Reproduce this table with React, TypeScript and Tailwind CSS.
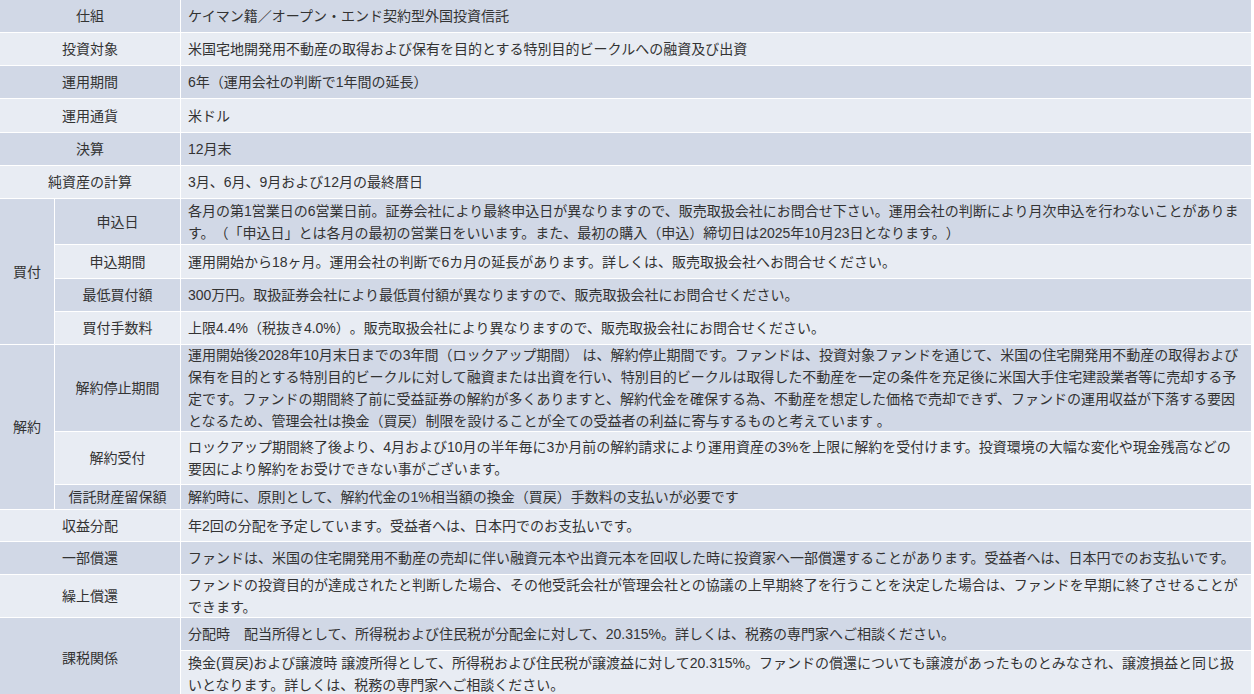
const dark = "bg-[#d1d8e6]";
const light = "bg-[#e8ecf3]";

type Item = { label: string; value: string; tone: string };

const top: Item[] = [
  { label: "仕組", value: "ケイマン籍／オープン・エンド契約型外国投資信託", tone: dark },
  { label: "投資対象", value: "米国宅地開発用不動産の取得および保有を目的とする特別目的ビークルへの融資及び出資", tone: light },
  { label: "運用期間", value: "6年（運用会社の判断で1年間の延長）", tone: dark },
  { label: "運用通貨", value: "米ドル", tone: light },
  { label: "決算", value: "12月末", tone: dark },
  { label: "純資産の計算", value: "3月、6月、9月および12月の最終暦日", tone: light },
];

const buy: Item[] = [
  {
    label: "申込日",
    value:
      "各月の第1営業日の6営業日前。証券会社により最終申込日が異なりますので、販売取扱会社にお問合せ下さい。運用会社の判断により月次申込を行わないことがあります。（「申込日」とは各月の最初の営業日をいいます。また、最初の購入（申込）締切日は2025年10月23日となります。）",
    tone: dark,
  },
  {
    label: "申込期間",
    value: "運用開始から18ヶ月。運用会社の判断で6カ月の延長があります。詳しくは、販売取扱会社へお問合せください。",
    tone: light,
  },
  {
    label: "最低買付額",
    value: "300万円。取扱証券会社により最低買付額が異なりますので、販売取扱会社にお問合せください。",
    tone: dark,
  },
  {
    label: "買付手数料",
    value: "上限4.4%（税抜き4.0%）。販売取扱会社により異なりますので、販売取扱会社にお問合せください。",
    tone: light,
  },
];

const sell: Item[] = [
  {
    label: "解約停止期間",
    value:
      "運用開始後2028年10月末日までの3年間（ロックアップ期間） は、解約停止期間です。ファンドは、投資対象ファンドを通じて、米国の住宅開発用不動産の取得および保有を目的とする特別目的ビークルに対して融資または出資を行い、特別目的ビークルは取得した不動産を一定の条件を充足後に米国大手住宅建設業者等に売却する予定です。ファンドの期間終了前に受益証券の解約が多くありますと、解約代金を確保する為、不動産を想定した価格で売却できず、ファンドの運用収益が下落する要因となるため、管理会社は換金（買戻）制限を設けることが全ての受益者の利益に寄与するものと考えています 。",
    tone: dark,
  },
  {
    label: "解約受付",
    value:
      "ロックアップ期間終了後より、4月および10月の半年毎に3か月前の解約請求により運用資産の3%を上限に解約を受付けます。投資環境の大幅な変化や現金残高などの要因により解約をお受けできない事がございます。",
    tone: light,
  },
  {
    label: "信託財産留保額",
    value: "解約時に、原則として、解約代金の1%相当額の換金（買戻）手数料の支払いが必要です",
    tone: dark,
  },
];

const bottom: Item[] = [
  { label: "収益分配", value: "年2回の分配を予定しています。受益者へは、日本円でのお支払いです。", tone: light },
  {
    label: "一部償還",
    value:
      "ファンドは、米国の住宅開発用不動産の売却に伴い融資元本や出資元本を回収した時に投資家へ一部償還することがあります。受益者へは、日本円でのお支払いです。",
    tone: dark,
  },
  {
    label: "繰上償還",
    value:
      "ファンドの投資目的が達成されたと判断した場合、その他受託会社が管理会社との協議の上早期終了を行うことを決定した場合は、ファンドを早期に終了させることができます。",
    tone: light,
  },
];

const tax: Item[] = [
  {
    label: "",
    value: "分配時　配当所得として、所得税および住民税が分配金に対して、20.315%。詳しくは、税務の専門家へご相談ください。",
    tone: dark,
  },
  {
    label: "",
    value:
      "換金(買戻)および譲渡時 譲渡所得として、所得税および住民税が譲渡益に対して20.315%。ファンドの償還についても譲渡があったものとみなされ、譲渡損益と同じ扱いとなります。詳しくは、税務の専門家へご相談ください。",
    tone: light,
  },
];

function Label({ text, tone, className = "" }: { text: string; tone: string; className?: string }) {
  return <div className={`${tone} flex items-center justify-center text-center ${className}`}>{text}</div>;
}

function Value({ text, tone }: { text: string; tone: string }) {
  return <div className={`${tone} flex items-center px-[7px]`}>{text}</div>;
}

export default function App() {
  return (
    <div className="min-h-screen bg-white">
      <div className="grid w-[1251px] grid-cols-[54px_125px_1070px] grid-rows-[32px_32px_32px_33px_32px_32px_45px_33px_32px_32px_86px_52px_24px_31px_32px_42px_32px_46px] gap-px bg-white text-[14px] leading-[22px] text-[#333] [font-family:'Liberation_Sans','Noto_Sans_CJK_JP',sans-serif] [text-spacing-trim:space-all]">
        {top.map((r) => (
          <div key={r.label} className="contents">
            <Label text={r.label} tone={r.tone} className="col-span-2" />
            <Value text={r.value} tone={r.tone} />
          </div>
        ))}

        <Label text="買付" tone={dark} className="row-span-4" />
        {buy.map((r) => (
          <div key={r.label} className="contents">
            <Label text={r.label} tone={r.tone} />
            <Value text={r.value} tone={r.tone} />
          </div>
        ))}

        <Label text="解約" tone={dark} className="row-span-3" />
        {sell.map((r) => (
          <div key={r.label} className="contents">
            <Label text={r.label} tone={r.tone} />
            <Value text={r.value} tone={r.tone} />
          </div>
        ))}

        {bottom.map((r) => (
          <div key={r.label} className="contents">
            <Label text={r.label} tone={r.tone} className="col-span-2" />
            <Value text={r.value} tone={r.tone} />
          </div>
        ))}

        <Label text="課税関係" tone={dark} className="col-span-2 row-span-2" />
        {tax.map((r, i) => (
          <Value key={i} text={r.value} tone={r.tone} />
        ))}
      </div>
    </div>
  );
}
